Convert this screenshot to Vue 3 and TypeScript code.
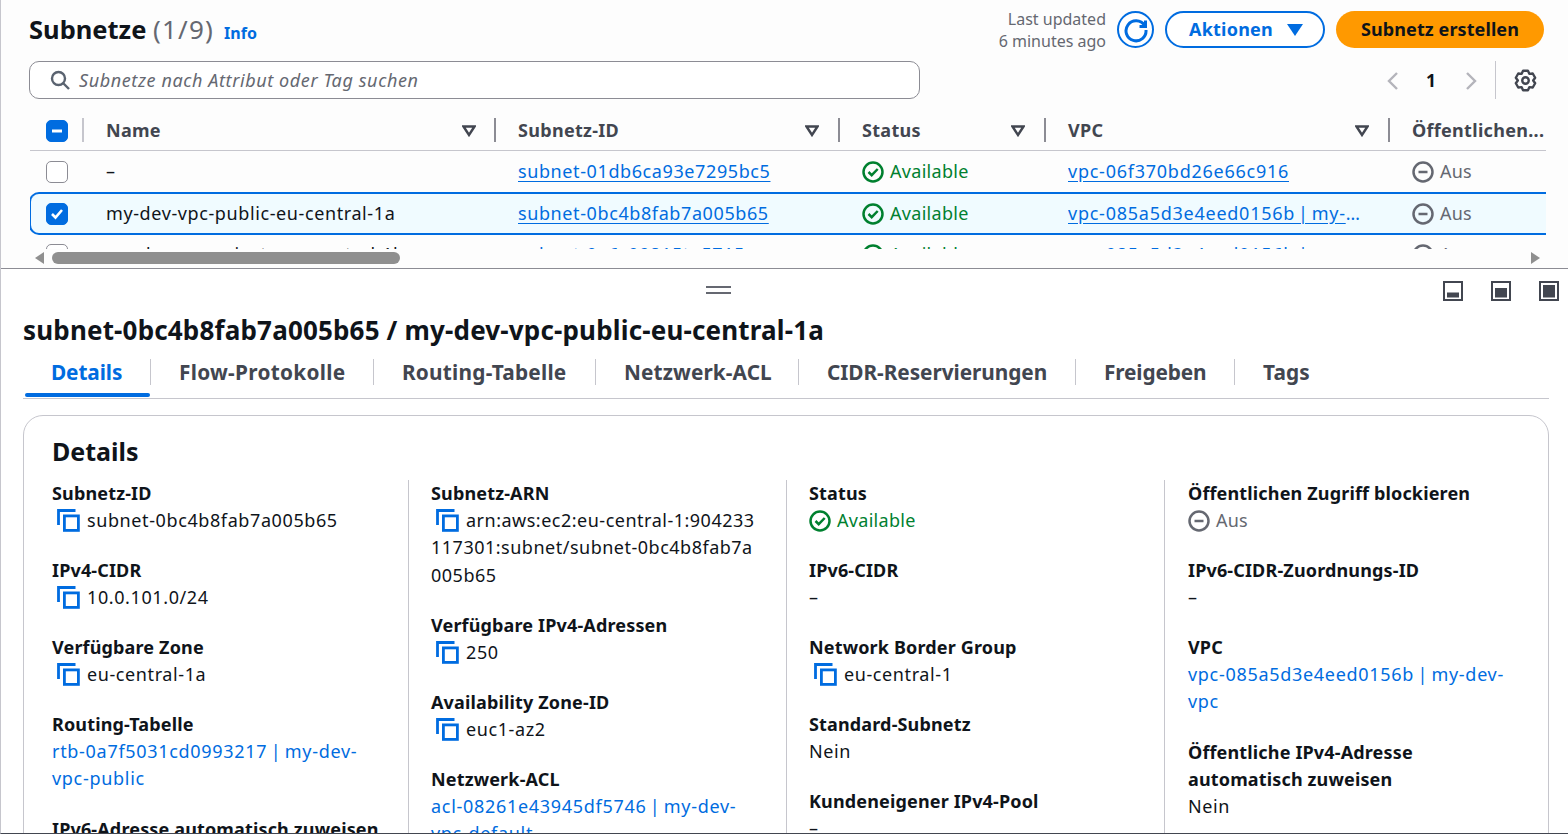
<script setup lang="ts">
type Item = { label: string; kind: 'copy' | 'text' | 'link' | 'ok' | 'off'; value: string; breakAll?: boolean }

const tabs = ['Details', 'Flow-Protokolle', 'Routing-Tabelle', 'Netzwerk-ACL', 'CIDR-Reservierungen', 'Freigeben', 'Tags']

const headers = ['Name', 'Subnetz-ID', 'Status', 'VPC', 'Öffentlichen...']

const rows = [
  { name: '–', id: 'subnet-01db6ca93e7295bc5', vpc: 'vpc-06f370bd26e66c916', sel: false },
  { name: 'my-dev-vpc-public-eu-central-1a', id: 'subnet-0bc4b8fab7a005b65', vpc: 'vpc-085a5d3e4eed0156b | my-dev-vpc', sel: true },
  { name: 'my-dev-vpc-private-eu-central-1b', id: 'subnet-0a6c09815to5715', vpc: 'vpc-085a5d3e4eed0156b | my-dev-vpc', sel: false }
]

const columns: Item[][] = [
  [
    { label: 'Subnetz-ID', kind: 'copy', value: 'subnet-0bc4b8fab7a005b65' },
    { label: 'IPv4-CIDR', kind: 'copy', value: '10.0.101.0/24' },
    { label: 'Verfügbare Zone', kind: 'copy', value: 'eu-central-1a' },
    { label: 'Routing-Tabelle', kind: 'link', value: 'rtb-0a7f5031cd0993217 | my-dev-vpc-public' },
    { label: 'IPv6-Adresse automatisch zuweisen', kind: 'text', value: 'Nein' }
  ],
  [
    { label: 'Subnetz-ARN', kind: 'copy', value: 'arn:aws:ec2:eu-central-1:904233117301:subnet/subnet-0bc4b8fab7a005b65', breakAll: true },
    { label: 'Verfügbare IPv4-Adressen', kind: 'copy', value: '250' },
    { label: 'Availability Zone-ID', kind: 'copy', value: 'euc1-az2' },
    { label: 'Netzwerk-ACL', kind: 'link', value: 'acl-08261e43945df5746 | my-dev-vpc-default' }
  ],
  [
    { label: 'Status', kind: 'ok', value: 'Available' },
    { label: 'IPv6-CIDR', kind: 'text', value: '–' },
    { label: 'Network Border Group', kind: 'copy', value: 'eu-central-1' },
    { label: 'Standard-Subnetz', kind: 'text', value: 'Nein' },
    { label: 'Kundeneigener IPv4-Pool', kind: 'text', value: '–' }
  ],
  [
    { label: 'Öffentlichen Zugriff blockieren', kind: 'off', value: 'Aus' },
    { label: 'IPv6-CIDR-Zuordnungs-ID', kind: 'text', value: '–' },
    { label: 'VPC', kind: 'link', value: 'vpc-085a5d3e4eed0156b | my-dev-vpc' },
    { label: 'Öffentliche IPv4-Adresse automatisch zuweisen', kind: 'text', value: 'Nein' }
  ]
]
</script>

<template>
  <div class="page">
    <section class="top">
      <header class="head">
        <h1 class="h1">Subnetze <span class="count">(1/9)</span></h1>
        <a class="info">Info</a>
        <div class="spacer"></div>
        <div class="updated">Last updated<br />6 minutes ago</div>
        <button class="refresh" aria-label="refresh">
          <svg width="26" height="26" viewBox="0 0 26 26" fill="none" stroke="#006ce0" stroke-width="3">
            <path d="M21.5 8.5A10 10 0 1 0 23 13" />
            <path d="M16.5 9.5h6v-6" stroke-linejoin="miter" />
          </svg>
        </button>
        <button class="btn-outline">Aktionen
          <svg width="16" height="12" viewBox="0 0 16 12"><path d="M0 0h16L8 12z" fill="#006ce0" /></svg>
        </button>
        <button class="btn-primary">Subnetz erstellen</button>
      </header>

      <div class="toolbar">
        <div class="search">
          <svg width="20" height="20" viewBox="0 0 20 20" fill="none" stroke="#5a6370" stroke-width="2.4">
            <circle cx="8.5" cy="8.5" r="6.5" /><path d="M13.5 13.5 19 19" />
          </svg>
          <span>Subnetze nach Attribut oder Tag suchen</span>
        </div>
        <div class="spacer"></div>
        <div class="pager">
          <svg width="12" height="20" viewBox="0 0 12 20" fill="none" stroke="#b4b4bb" stroke-width="2.4"><path d="M10 2 2 10l8 8" /></svg>
          <b>1</b>
          <svg width="12" height="20" viewBox="0 0 12 20" fill="none" stroke="#b4b4bb" stroke-width="2.4"><path d="m2 2 8 8-8 8" /></svg>
        </div>
        <div class="gear-box">
          <svg width="23" height="23" viewBox="0 0 24 24" fill="none" stroke="#424650" stroke-width="2.500" stroke-linejoin="round">
            <path d="M9.460 1.810h5.080L16 5.070l3.550-.37 2.540 4.410L20 12l2.090 2.890-2.540 4.410-3.550-.37-1.460 3.260H9.460L8 18.930l-3.550.37-2.540-4.410L4 12 1.910 9.110 4.450 4.700 8 5.070z" />
            <circle cx="12" cy="12" r="3.400" />
          </svg>
        </div>
      </div>

      <div class="table-clip">
        <div class="t-head t-row">
          <div class="c-check">
            <span class="box on"><svg width="14" height="14" viewBox="0 0 14 14"><path d="M2 7h10" stroke="#fff" stroke-width="3" /></svg></span>
          </div>
          <div v-for="(h, i) in headers" :key="h" class="th" :class="'col' + i">
            <span class="th-bar"></span>
            <span class="th-text">{{ h }}</span>
            <svg v-if="i < 4" class="sort" width="14" height="12" viewBox="0 0 14 12" fill="none" stroke="#424650" stroke-width="2.4"><path d="M1.500 1.500h11L7 10z" /></svg>
          </div>
        </div>
        <div v-for="r in rows" :key="r.id" class="t-row body-row" :class="{ sel: r.sel }">
          <div class="c-check">
            <span class="box" :class="{ on: r.sel }">
              <svg v-if="r.sel" width="14" height="14" viewBox="0 0 14 14" fill="none" stroke="#fff" stroke-width="2.600"><path d="m2 7 3.500 3.500L12 3" /></svg>
            </span>
          </div>
          <div class="td col0 val">{{ r.name }}</div>
          <div class="td col1 val"><a class="ulink">{{ r.id }}</a></div>
          <div class="td col2 st-ok">
            <svg width="22" height="22" viewBox="0 0 22 22" fill="none" stroke="#00802f" stroke-width="2.500"><circle cx="11" cy="11" r="9.500" /><path d="m6.500 11 3.200 3.200 6-6.200" /></svg>
            <span>Available</span>
          </div>
          <div class="td col3"><a class="ulink trunc">{{ r.vpc }}</a></div>
          <div class="td col4 st-off">
            <svg width="22" height="22" viewBox="0 0 22 22" fill="none" stroke="#656871" stroke-width="2.500"><circle cx="11" cy="11" r="9.500" /><path d="M6.500 11h9" /></svg>
            <span>Aus</span>
          </div>
        </div>
      </div>

      <div class="hscroll">
        <svg width="10" height="12" viewBox="0 0 10 12"><path d="M9 0v12L0 6z" fill="#8f8f8f" /></svg>
        <div class="track"><div class="thumb"></div></div>
        <svg width="10" height="12" viewBox="0 0 10 12"><path d="M1 0v12l9-6z" fill="#8f8f8f" /></svg>
      </div>
    </section>

    <section class="bottom">
      <div class="drag-row">
        <div class="grip"></div>
        <div class="panes">
          <svg width="20" height="20" viewBox="0 0 20 20"><rect x="1" y="1" width="18" height="18" fill="none" stroke="#424650" stroke-width="2" /><rect x="4" y="11.500" width="12" height="5" fill="#424650" /></svg>
          <svg width="20" height="20" viewBox="0 0 20 20"><rect x="1" y="1" width="18" height="18" fill="none" stroke="#424650" stroke-width="2" /><rect x="4" y="7" width="12" height="9.500" fill="#424650" /></svg>
          <svg width="20" height="20" viewBox="0 0 20 20"><rect x="1" y="1" width="18" height="18" fill="none" stroke="#424650" stroke-width="2" /><rect x="4" y="4" width="12" height="12.500" fill="#424650" /></svg>
        </div>
      </div>

      <h2 class="h2">subnet-0bc4b8fab7a005b65 / my-dev-vpc-public-eu-central-1a</h2>

      <nav class="tabs">
        <div v-for="(t, i) in tabs" :key="t" class="tab" :class="{ active: i === 0 }">{{ t }}</div>
      </nav>

      <div class="card">
        <h3 class="h3">Details</h3>
        <div class="grid">
          <div v-for="(col, ci) in columns" :key="ci" class="col">
            <div v-for="it in col" :key="it.label" class="kv">
              <div class="k">{{ it.label }}</div>
              <div v-if="it.kind === 'copy'" class="v copy val">
                <svg class="copy-ic" width="23" height="23" viewBox="0 0 23 23" fill="none" stroke="#006ce0" stroke-width="2.800">
                  <path d="M1.500 16V1.500h17" /><rect x="7.400" y="6.900" width="14" height="14.500" />
                </svg>
                <span :class="{ brk: it.breakAll }">{{ it.value }}</span>
              </div>
              <div v-else-if="it.kind === 'link'" class="v link">{{ it.value }}</div>
              <div v-else-if="it.kind === 'ok'" class="v st-ok">
                <svg width="22" height="22" viewBox="0 0 22 22" fill="none" stroke="#00802f" stroke-width="2.500"><circle cx="11" cy="11" r="9.500" /><path d="m6.500 11 3.200 3.200 6-6.200" /></svg>
                <span>{{ it.value }}</span>
              </div>
              <div v-else-if="it.kind === 'off'" class="v st-off">
                <svg width="22" height="22" viewBox="0 0 22 22" fill="none" stroke="#656871" stroke-width="2.500"><circle cx="11" cy="11" r="9.500" /><path d="M6.500 11h9" /></svg>
                <span>{{ it.value }}</span>
              </div>
              <div v-else class="v val">{{ it.value }}</div>
            </div>
          </div>
        </div>
      </div>
    </section>
  </div>
</template>

<style scoped>
.page {
  width: 1568px;
  height: 834px;
  overflow: hidden;
  box-sizing: border-box;
  border-left: 1px solid #c6c6cd;
  border-bottom: 1px solid #424650;
  font-family: "Noto Sans", sans-serif;
  font-size: 18px;
  line-height: 27.5px;
  color: #0f141a;
  background: #fff;
}
.val { letter-spacing: 0.600px; }
.spacer { flex: 1; }
.top {
  height: 269px;
  box-sizing: border-box;
  padding: 11px 24px 0 28px;
  background: #fdfdfd;
  border-bottom: 1px solid #8c8c94;
  position: relative;
}
.head { display: flex; align-items: center; height: 37px; }
.h1 { margin: 0; font-size: 25.500px; line-height: 37px; font-weight: 700; }
.count { font-weight: 400; color: #656871; letter-spacing: 1.200px; font-size: 26px; }
.info { margin-left: 10px; font-size: 16px; font-weight: 700; color: #006ce0; position: relative; top: 4px; }
.updated { font-size: 16px; line-height: 22px; color: #656871; text-align: right; margin-right: 11px; }
button { font-family: inherit; cursor: pointer; box-sizing: border-box; }
.refresh {
  width: 37px; height: 37px; border-radius: 50%; border: 2px solid #006ce0; background: #fff;
  display: flex; align-items: center; justify-content: center; padding: 0;
}
.btn-outline {
  margin-left: 11px; width: 160px; height: 37px; border-radius: 20px; border: 2px solid #006ce0; background: #fff;
  color: #006ce0; font-size: 18px; letter-spacing: 0.200px; line-height: 33px; font-weight: 700; display: flex; align-items: center; justify-content: center; gap: 14px; padding: 0 0 0 2px;
}
.btn-primary {
  margin-left: 11px; width: 208px; height: 37px; border-radius: 20px; border: none; background: #ff9900;
  color: #0f141a; font-size: 18px; letter-spacing: 0.100px; font-weight: 700; padding-bottom: 2px;
}
.toolbar { display: flex; align-items: center; margin-top: 13px; height: 38px; }
.search {
  width: 891px; height: 38px; box-sizing: border-box; border: 1px solid #8c8c94; border-radius: 10px;
  display: flex; align-items: center; gap: 9px; padding-left: 20px; background: #fff;
  font-style: italic; color: #656871; letter-spacing: 0.600px;
}
.search span { margin-top: 1px; }
.pager { display: flex; align-items: center; gap: 0; margin-top: 2px; }
.pager b { width: 64px; padding-right: 2px; text-align: center; font-size: 17.500px; }
.gear-box {
  margin-left: 18px; padding-left: 18px; border-left: 1px solid #c6c6cd; height: 38px;
  display: flex; align-items: center; width: 30px;
}
.table-clip { margin-top: 12px; height: 138px; overflow: hidden; width: 1516px; margin-left: 1px; }
.t-row { display: flex; }
.c-check { width: 52px; flex: none; display: flex; align-items: center; padding-left: 16px; box-sizing: border-box; }
.box {
  width: 22px; height: 22px; box-sizing: border-box; border-radius: 5px; border: 1.500px solid #8c8c94; background: #fff;
  display: flex; align-items: center; justify-content: center;
}
.box.on { background: #006ce0; border-color: #006ce0; }
.t-head { height: 40px; border-bottom: 1px solid #c6c6cd; box-sizing: border-box; }
.th { display: flex; align-items: center; box-sizing: border-box; font-weight: 700; color: #424650; padding-left: 24px; padding-right: 19px; position: relative; letter-spacing: 0.300px; }
.th-bar { position: absolute; left: 0; top: 7px; width: 2px; height: 24px; background: #8c8c94; }
.th-text { flex: 1; white-space: nowrap; }
.col0 { width: 412px; flex: none; }
.col1 { width: 344px; flex: none; }
.col2 { width: 206px; flex: none; }
.col3 { width: 344px; flex: none; }
.col4 { width: 157px; flex: none; }
.th.col0 .th-bar { background: #c6c6cd; }
.th.col0 { padding-right: 18px; }
.th.col4 { padding-right: 0; }
.body-row { height: 42px; box-sizing: border-box; }
.td { display: flex; align-items: center; gap: 6px; padding-left: 24px; box-sizing: border-box; white-space: nowrap; min-width: 0; }
.body-row.sel {
  background: #f0fbff; border-top: 2px solid #006ce0; border-bottom: 2px solid #006ce0; border-left: 2px solid #006ce0;
  border-radius: 10px 0 0 10px; height: 43px; margin-left: -1px; margin-top: -1px; margin-bottom: -1px;
}
.body-row.sel .c-check { width: 51px; padding-left: 15px; }
.ulink { color: #006ce0; text-decoration: underline; text-underline-offset: 3px; }
.trunc { max-width: 295px; overflow: hidden; text-overflow: ellipsis; display: block; letter-spacing: 0.750px; word-spacing: -2.500px; }
.st-ok { color: #00802f; letter-spacing: 0.300px; }
.st-off { color: #656871; letter-spacing: 0.200px; }
.hscroll { display: flex; align-items: center; gap: 7px; margin-top: 2px; height: 14px; margin-left: 6px; width: 1505px; }
.track { flex: 1; height: 12px; }
.thumb { width: 348px; height: 12px; border-radius: 6px; background: #8f8f8f; }
.bottom { padding: 0 18px 0 22px; }
.drag-row { height: 42px; display: flex; position: relative; }
.grip { position: absolute; left: 683px; top: 17px; width: 25px; height: 4px; border-top: 2px solid #656871; border-bottom: 2px solid #656871; }
.panes { margin-left: auto; display: flex; gap: 28px; margin-top: 12px; height: 20px; margin-right: -9px; }
.h2 { margin: 1px 0 0; font-size: 26px; letter-spacing: 0.170px; line-height: 37px; font-weight: 700; white-space: nowrap; }
.tabs { display: flex; height: 50px; border-bottom: 1px solid #c6c6cd; box-sizing: border-box; padding-top: 10px; width: 1526px; }
.tab {
  font-size: 20.800px; letter-spacing: 0.100px; line-height: 26px; font-weight: 700; color: #424650; height: 26px; padding: 0 0 0 28px;
  border-left: 1px solid #c6c6cd; white-space: nowrap; position: relative; box-sizing: border-box;
}
.tab:nth-child(1) { border-left: none; margin-left: 2px; padding-left: 26px; width: 125px; letter-spacing: -0.100px; }
.tab:nth-child(2) { width: 223px; letter-spacing: 0.280px; }
.tab:nth-child(3) { width: 222px; letter-spacing: 0.230px; }
.tab:nth-child(4) { width: 203px; }
.tab:nth-child(5) { width: 277px; letter-spacing: -0.050px; }
.tab:nth-child(6) { width: 159px; letter-spacing: -0.120px; }
.tab.active { color: #006ce0; }
.tab.active::after {
  content: ""; position: absolute; left: 0; right: 0; top: 34px; height: 4px; background: #006ce0; border-radius: 2px;
}
.card {
  margin-top: 16px; border: 1px solid #c6c6cd; border-radius: 20px; padding: 18px 0 0 28px; height: 500px; box-sizing: border-box;
  width: 1526px;
}
.h3 { margin: 0; font-size: 25px; line-height: 34px; font-weight: 700; }
.grid { display: grid; grid-template-columns: 356px 378px 378px 378px; margin-top: 12px; }
.col { padding: 0 30px 0 22px; border-left: 1px solid #c6c6cd; box-sizing: border-box; }
.col:first-child { border-left: none; padding-left: 0; padding-right: 22px; }
.col:last-child { padding-left: 23px; }
.kv { margin-bottom: 23px; }
.k { font-weight: 700; letter-spacing: 0.150px; }
.v { display: flex; align-items: flex-start; gap: 6px; margin-top: -1px; }
.v.st-ok svg, .v.st-off svg { margin-top: 3px; }
.copy { display: block; }
.copy-ic { margin: 0 7px 0 5px; vertical-align: -5px; }
.brk { word-break: break-all; letter-spacing: 0.500px; }
.link { color: #006ce0; display: block; letter-spacing: 0.700px; word-spacing: -2px; }
</style>

<style>
html, body { margin: 0; overflow: hidden; }
</style>
